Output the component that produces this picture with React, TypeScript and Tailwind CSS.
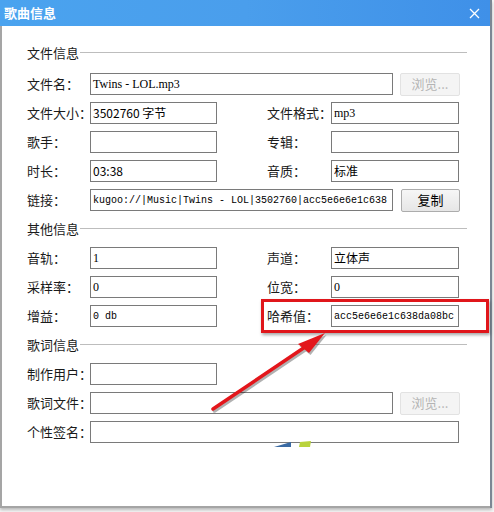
import React from 'react'

const cjk = "font-['Noto_Sans_CJK_SC',sans-serif]"
const serif = "font-['Liberation_Serif','Noto_Sans_CJK_SC',serif] text-[12px]"
const sans = "font-['Noto_Sans_CJK_SC',sans-serif] text-[12px]"
const mono = "font-['Liberation_Mono','Noto_Sans_CJK_SC',monospace] text-[10px]"

const Field = ({ w, value = '', font = serif }: { w: string; value?: string; font?: string }) => (
  <div
    className={`${w} h-[22px] shrink-0 border border-[#7a7a7a] bg-white pl-[2px] flex items-center overflow-hidden whitespace-nowrap text-black ${font}`}
  >
    {value}
  </div>
)

const Label = ({ text, right = false }: { text: string; right?: boolean }) => (
  <div className={`${right ? 'ml-[50px] w-[64px]' : 'w-[63px]'} shrink-0 text-[13px] leading-[22px] text-[#1a1a1a] whitespace-nowrap`}>
    {text}
  </div>
)

const Browse = () => (
  <div className="ml-[7px] w-[60px] h-[23px] border border-[#e2e2e2] bg-[#f4f4f4] rounded-[2px] flex items-center justify-center text-[13px] text-[#b4b4b4]">
    浏览...
  </div>
)

const Header = ({ text }: { text: string }) => (
  <div className="h-[22px] flex items-center pr-[23px]">
    <span className="text-[13px] text-[#1a1a1a]">{text}</span>
    <div className="ml-[1px] flex-1 h-px bg-[#bdbdbd] -translate-y-[1px]" />
  </div>
)

const Row = ({ children }: { children: React.ReactNode }) => <div className="h-[22px] flex items-center">{children}</div>

export default function App() {
  return (
    <div className={`w-[494px] h-[512px] bg-[#f7f7f7] relative overflow-hidden ${cjk}`}>
      <div className="w-[492px] h-[508px] flex flex-col border-r-2 border-[#7b8794] shadow-[0_2px_3px_rgba(0,0,0,0.25)]">
        {/* title bar */}
        <div className="h-[26px] shrink-0 bg-gradient-to-r from-[#4aa3ef] via-[#4a9eec] to-[#3f90e8] flex items-center justify-between pl-[4px] pr-[10px]">
          <span className="text-white text-[13px] font-bold">歌曲信息</span>
          <svg width="11" height="11" viewBox="0 0 11 11">
            <path d="M1 1 L10 10 M10 1 L1 10" stroke="#ffffff" strokeWidth="1.3" fill="none" />
          </svg>
        </div>

        {/* body */}
        <div className="flex-1 bg-white border-l-2 border-b-2 border-[#a5a5a5] pt-[16px] pl-[25px] flex flex-col gap-[7px]">
          <div className="mb-[2px]">
            <Header text="文件信息" />
          </div>
          <Row>
            <Label text="文件名：" />
            <Field w="w-[303px]" value="Twins - LOL.mp3" />
            <Browse />
          </Row>
          <Row>
            <Label text="文件大小：" />
            <Field w="w-[127px]" value="3502760 字节" font={sans} />
            <Label text="文件格式：" right />
            <Field w="w-[128px]" value="mp3" />
          </Row>
          <Row>
            <Label text="歌手：" />
            <Field w="w-[127px]" />
            <Label text="专辑：" right />
            <Field w="w-[128px]" />
          </Row>
          <Row>
            <Label text="时长：" />
            <Field w="w-[127px]" value="03:38" font={sans} />
            <Label text="音质：" right />
            <Field w="w-[128px]" value="标准" font={sans} />
          </Row>
          <Row>
            <Label text="链接：" />
            <Field w="w-[303px]" value="kugoo://|Music|Twins - LOL|3502760|acc5e6e6e1c638" font={mono} />
            <div className="ml-[8px] w-[59px] h-[23px] border border-[#acacac] bg-gradient-to-b from-[#f6f6f6] to-[#e6e6e6] rounded-[2px] flex items-center justify-center text-[13px] text-black">
              复制
            </div>
          </Row>

          <Header text="其他信息" />
          <Row>
            <Label text="音轨：" />
            <Field w="w-[127px]" value="1" />
            <Label text="声道：" right />
            <Field w="w-[128px]" value="立体声" font={sans} />
          </Row>
          <Row>
            <Label text="采样率：" />
            <Field w="w-[127px]" value="0" />
            <Label text="位宽：" right />
            <Field w="w-[128px]" value="0" />
          </Row>
          <Row>
            <Label text="增益：" />
            <Field w="w-[127px]" value="0  db" font={mono} />
            <Label text="哈希值：" right />
            <Field w="w-[128px]" value="acc5e6e6e1c638da08bc" font={mono} />
          </Row>

          <Header text="歌词信息" />
          <Row>
            <Label text="制作用户：" />
            <Field w="w-[127px]" />
          </Row>
          <Row>
            <Label text="歌词文件：" />
            <Field w="w-[303px]" />
            <Browse />
          </Row>
          <Row>
            <Label text="个性签名：" />
            <Field w="w-[369px]" />
          </Row>
        </div>
      </div>

      {/* annotation: red box around hash row */}
      <div className="absolute left-[261px] top-[299px] w-[228px] h-[34px] border-[3px] border-[#e0161b] shadow-[1px_2px_3px_rgba(0,0,0,0.35)]" />

      {/* annotation: red arrow */}
      <svg className="absolute left-0 top-0 pointer-events-none" width="494" height="512" viewBox="0 0 494 512">
        <g opacity="0.3" transform="translate(1.5,2)">
          <line x1="213" y1="409" x2="308" y2="345" stroke="#000" strokeWidth="3.5" strokeLinecap="round" />
          <polygon points="325,333 298,344 309,353" fill="#000" />
        </g>
        <line x1="213" y1="409" x2="308" y2="345" stroke="#e3161b" strokeWidth="3.5" strokeLinecap="round" />
        <polygon points="325,333 298,344 309,353" fill="#e3161b" />
        {/* small watermark marks */}
        <polygon points="274,447 291,442 291,447" fill="#3a6aa3" />
        <polygon points="300,442 311,441 310,447 299,447" fill="#b9d33c" />
      </svg>
    </div>
  )
}
